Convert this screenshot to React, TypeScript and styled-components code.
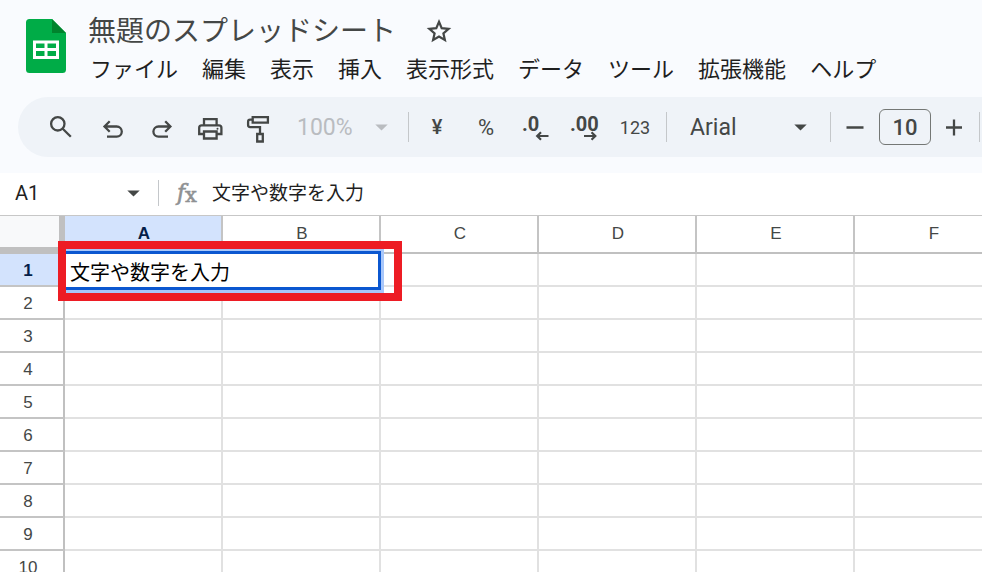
import React from "react";
import styled, { createGlobalStyle } from "styled-components";

const UI = `Roboto, "Noto Sans CJK JP", sans-serif`;
const CELL = `"Liberation Sans", "Noto Sans CJK JP", sans-serif`;
const INK = "#444746";

const GlobalStyle = createGlobalStyle`
  * { box-sizing: border-box; }
  html, body { margin: 0; height: 100%; overflow: hidden; background: #fff; }
  button, input, select { margin: 0; padding: 0; border: 0; background: none; color: inherit; font: inherit; outline: none; }
  button { cursor: pointer; }
`;

const Page = styled.div`
  height: 100vh;
  overflow: hidden;
  display: flex;
  flex-direction: column;
  font-family: ${UI};
  color: #1f1f1f;
`;

const Top = styled.header`
  flex: none;
  background: #f9fbfe;
  padding: 8px 0 16px;
`;

const Brand = styled.div`
  display: flex;
  align-items: flex-start;
  gap: 22px;
  padding: 0 26px 10px;
`;

const LogoLink = styled.a`
  display: block;
  width: 40px;
  height: 54px;
  margin-top: 11px;
  flex: none;
`;

const Titles = styled.div`
  flex: 1;
  min-width: 0;
`;

const TitleRow = styled.div`
  display: flex;
  align-items: center;
  height: 44px;
  gap: 28px;
`;

const TitleInput = styled.input`
  width: 310px;
  height: 44px;
  padding-bottom: 2px;
  font-size: 28px;
  color: ${INK};
`;

const StarButton = styled.button`
  display: flex;
`;

const Menu = styled.nav`
  display: flex;
  gap: 24px;
  height: 35px;
  padding-left: 2px;
`;

const MenuButton = styled.button`
  font-size: 22px;
  line-height: 35px;
  white-space: nowrap;
`;

const Toolbar = styled.div`
  display: flex;
  align-items: center;
  height: 60px;
  margin-left: 18px;
  padding-left: 18px;
  border-radius: 30px 0 0 30px;
  background: #eff3f8;
  color: ${INK};
  overflow: hidden;
`;

const Group = styled.div<{ $gap?: number; $start?: number; $end?: number }>`
  display: flex;
  flex: none;
  align-items: center;
  gap: ${(p) => p.$gap ?? 0}px;
  padding-left: ${(p) => p.$start ?? 0}px;
  padding-right: ${(p) => p.$end ?? 0}px;
`;

const Tool = styled.button<{ $wide?: boolean; $size?: number; $medium?: boolean }>`
  display: flex;
  flex: none;
  align-items: center;
  justify-content: center;
  width: ${(p) => (p.$wide ? 52 : 48)}px;
  height: 48px;
  font-size: ${(p) => p.$size ?? 20}px;
  font-weight: ${(p) => (p.$medium ? 500 : 400)};
`;

const Divider = styled.span<{ $height?: number }>`
  flex: none;
  width: 1px;
  height: ${(p) => p.$height ?? 30}px;
  background: #c4c7ca;
`;

const Picker = styled.label<{ $width: number; $start: number; $end: number; $faded?: boolean }>`
  display: flex;
  flex: none;
  align-items: center;
  width: ${(p) => p.$width}px;
  padding-left: ${(p) => p.$start}px;
  padding-right: ${(p) => p.$end}px;
  color: ${(p) => (p.$faded ? "#b9bcc0" : INK)};
`;

const PickerSelect = styled.select`
  flex: 1;
  min-width: 0;
  height: 36px;
  appearance: none;
  font-size: 23px;
  opacity: 1;
`;

const SizeInput = styled.input`
  flex: none;
  width: 52px;
  height: 36px;
  border: 1px solid #747775;
  border-radius: 6px;
  text-align: center;
  font-size: 22px;
  font-weight: 500;
`;

const FormulaBar = styled.div`
  flex: none;
  display: flex;
  align-items: center;
  height: 43px;
  padding-bottom: 2px;
  border-bottom: 1px solid #c7c7c7;
  background: #fff;
`;

const NameBox = styled.label`
  display: flex;
  align-items: center;
  width: 158px;
  padding: 0 18px 0 15px;
  color: ${INK};
`;

const NameInput = styled.input`
  flex: 1;
  min-width: 0;
  font-size: 20px;
  color: #1f1f1f;
`;

const FormulaIcon = styled.span`
  display: flex;
  width: 53px;
  padding-left: 13px;
`;

const FormulaInput = styled.input`
  flex: 1;
  min-width: 0;
  height: 36px;
  padding-bottom: 4px;
  font-size: 19px;
`;

const SheetArea = styled.main`
  flex: 1;
  min-height: 0;
  overflow: hidden;
`;

const Sheet = styled.table`
  table-layout: fixed;
  width: max-content;
  border-collapse: separate;
  border-spacing: 0;
  font-family: ${CELL};
  font-size: 17px;
`;

const RowCol = styled.col`
  width: 65px;
`;

const DataCol = styled.col`
  width: 158px;
`;

const Corner = styled.td`
  height: 38px;
  padding: 0;
  background: #f8f9fa;
  border-right: 6px solid #c0c0c0;
  border-bottom: 7px solid #c0c0c0;
`;

const ColHead = styled.th<{ $active: boolean }>`
  height: 38px;
  padding: 0 0 0 2px;
  border-right: 2px solid #c4c4c4;
  border-bottom: 2px solid #c0c0c0;
  background: ${(p) => (p.$active ? "#d3e3fd" : "#fff")};
  color: ${(p) => (p.$active ? "#041e49" : INK)};
  font-weight: ${(p) => (p.$active ? 700 : 400)};
`;

const RowHead = styled.th<{ $active: boolean }>`
  height: 33px;
  padding: 2px 7px 0 0;
  border-right: 2px solid #c0c0c0;
  border-bottom: 2px solid #c4c4c4;
  background: ${(p) => (p.$active ? "#d3e3fd" : "#fff")};
  color: ${(p) => (p.$active ? "#041e49" : INK)};
  font-weight: ${(p) => (p.$active ? 700 : 400)};
`;

const Cell = styled.td`
  position: relative;
  height: 33px;
  padding: 0;
  border-right: 2px solid #e1e1e1;
  border-bottom: 2px solid #e1e1e1;
`;

const CellEditor = styled.input`
  && {
    position: absolute;
    z-index: 1;
    top: -3px;
    left: -3px;
    width: 319px;
    height: 39px;
    padding: 2px 4px 0 5px;
    border: 3px solid #0b57d0;
    background: #fff;
    box-shadow: 0 0 0 3px #a8c7fa;
    color: #000;
    font-size: 20px;
  }
`;

const Highlight = styled.div`
  position: absolute;
  z-index: 2;
  top: -13px;
  left: -7px;
  width: 344px;
  height: 60px;
  border: 8px solid #ed1c24;
  pointer-events: none;
`;

const ToolIcon = ({ children }: { children: React.ReactNode }) => (
  <svg width="32" height="32" viewBox="-2 -2 32 32" fill="none" stroke={INK} strokeWidth="2.3" aria-hidden="true">
    {children}
  </svg>
);

const Caret = () => (
  <svg width="13" height="7" viewBox="0 0 13 7" aria-hidden="true">
    <path d="M0.3 0.4h12.4L6.5 6.6z" fill="currentColor" />
  </svg>
);

const Logo = () => (
  <svg width="40" height="54" viewBox="0 0 40 54" aria-hidden="true">
    <path d="M3.5 0H26l14 14v36.500a3.500 3.500 0 0 1-3.500 3.500h-33A3.500 3.500 0 0 1 0 50.500v-47A3.500 3.500 0 0 1 3.500 0z" fill="#00ac47" />
    <path d="M26 0l14 14H26z" fill="#00832d" />
    <path d="M7 21.500h26V40H7zM10 24.500v4.500h8.500v-4.500zM21.500 24.500v4.500H30v-4.500zM10 32v5h8.500v-5zM21.500 32v5H30v-5z" fill="#fff" fillRule="evenodd" />
  </svg>
);

const Star = () => (
  <svg width="26" height="26" viewBox="0 0 26 26" fill="none" stroke={INK} strokeWidth="2.2" aria-hidden="true">
    <path d="M13 4.800l2.700 6.400 6.900.6-5.200 4.500 1.500 6.700-5.900-3.500-5.900 3.500 1.500-6.700-5.200-4.500 6.900-.6z" />
  </svg>
);

const Decimal = ({ digits, add }: { digits: string; add: boolean }) => (
  <svg width="32" height="32" viewBox="0 0 32 32" aria-hidden="true">
    <text x={add ? 2 : 3} y="19.500" fill={INK} fontFamily="Roboto, sans-serif" fontWeight="700" fontSize="20">
      {digits}
    </text>
    <path
      d={add ? "M16 25h11M23.500 21.300l3.800 3.700-3.800 3.700" : "M29.500 25h-11M22 21.300L18.200 25l3.800 3.700"}
      fill="none"
      stroke={INK}
      strokeWidth="2.200"
    />
  </svg>
);

const menus = ["ファイル", "編集", "表示", "挿入", "表示形式", "データ", "ツール", "拡張機能", "ヘルプ"];
const columns = ["A", "B", "C", "D", "E", "F"];
const rows = [1, 2, 3, 4, 5, 6, 7, 8, 9, 10];

export default function App() {
  const [title, setTitle] = React.useState("無題のスプレッドシート");
  const [value, setValue] = React.useState("文字や数字を入力");
  const [size, setSize] = React.useState("10");
  const step = (by: number) => setSize(String(Math.max(1, (Number(size) || 0) + by)));

  return (
    <Page>
      <GlobalStyle />
      <Top>
        <Brand>
          <LogoLink href="#" aria-label="スプレッドシート ホーム">
            <Logo />
          </LogoLink>
          <Titles>
            <TitleRow>
              <TitleInput aria-label="名前を変更" value={title} onChange={(e) => setTitle(e.target.value)} />
              <StarButton aria-label="スターを付ける">
                <Star />
              </StarButton>
            </TitleRow>
            <Menu>
              {menus.map((m) => (
                <MenuButton key={m}>{m}</MenuButton>
              ))}
            </Menu>
          </Titles>
        </Brand>
        <Toolbar role="toolbar">
          <Group $end={5}>
            <Tool aria-label="検索">
              <ToolIcon>
                <circle cx="11.800" cy="10.800" r="6.700" />
                <path d="M16.500 15.500l8.300 8.300" />
              </ToolIcon>
            </Tool>
          </Group>
          <Group>
            <Tool aria-label="元に戻す">
              <ToolIcon>
                <path d="M6 13.500h11.700a5.100 5.100 0 0 1 0 10.200H8M10.700 8.300L5.500 13.500l5.200 5.200" />
              </ToolIcon>
            </Tool>
            <Tool aria-label="やり直し">
              <ToolIcon>
                <path d="M23 13.500H11.500a5.100 5.100 0 0 0 0 10.200H21M18.200 8.300l5.200 5.200-5.200 5.200" />
              </ToolIcon>
            </Tool>
            <Tool aria-label="印刷">
              <ToolIcon>
                <path d="M9 12V6.200h12.600V12M9 21H4.200v-6.200a2.500 2.500 0 0 1 2.500-2.500h17.200a2.500 2.500 0 0 1 2.500 2.500V21h-4.800M9 18.500h12.600v7H9z" />
                <circle cx="22.500" cy="15.700" r="1" fill={INK} stroke="none" />
              </ToolIcon>
            </Tool>
            <Tool aria-label="書式を貼り付け">
              <ToolIcon>
                <path d="M9.700 4.200h15.200v5.500H9.700zM9.700 6.700H7.100a2 2 0 0 0-2 2v3.400a2 2 0 0 0 2 2h9.900v6.200M14.200 21h5.600v7.500h-5.600z" />
              </ToolIcon>
            </Tool>
          </Group>
          <Picker $width={127} $start={16} $end={20} $faded>
            <PickerSelect aria-label="ズーム" defaultValue="100%">
              <option>100%</option>
            </PickerSelect>
            <Caret />
          </Picker>
          <Divider />
          <Group $gap={1} $start={4} $end={5}>
            <Tool aria-label="通貨の表示形式" $medium>¥</Tool>
            <Tool aria-label="パーセント表示形式" $size={22}>%</Tool>
            <Tool aria-label="小数点以下の桁数を減らす">
              <Decimal digits=".0" add={false} />
            </Tool>
            <Tool aria-label="小数点以下の桁数を増やす">
              <Decimal digits=".00" add />
            </Tool>
            <Tool aria-label="表示形式の詳細設定" $wide $size={18}>123</Tool>
          </Group>
          <Divider />
          <Picker $width={163} $start={23} $end={23}>
            <PickerSelect aria-label="フォント" defaultValue="Arial">
              <option>Arial</option>
            </PickerSelect>
            <Caret />
          </Picker>
          <Divider />
          <Tool aria-label="フォントサイズを縮小" onClick={() => step(-1)}>
            <ToolIcon>
              <path d="M5.500 14.500h17" />
            </ToolIcon>
          </Tool>
          <SizeInput aria-label="フォントサイズ" value={size} onChange={(e) => setSize(e.target.value)} />
          <Tool aria-label="フォントサイズを拡大" onClick={() => step(1)}>
            <ToolIcon>
              <path d="M5 14.500h16M13 6.500v16" />
            </ToolIcon>
          </Tool>
          <Divider />
        </Toolbar>
      </Top>
      <FormulaBar>
        <NameBox>
          <NameInput aria-label="名前ボックス" defaultValue="A1" />
          <Caret />
        </NameBox>
        <Divider $height={26} />
        <FormulaIcon>
          <svg width="32" height="34" viewBox="0 0 32 34" aria-hidden="true">
            <g fill="#8f9193" stroke="#8f9193" strokeWidth="0.600">
              <text x="5" y="24" fontFamily="DejaVu Serif, serif" fontStyle="italic" fontSize="22">f</text>
              <text x="13" y="26" fontFamily="DejaVu Serif, serif" fontSize="21">x</text>
            </g>
          </svg>
        </FormulaIcon>
        <FormulaInput aria-label="数式バー" value={value} onChange={(e) => setValue(e.target.value)} />
      </FormulaBar>
      <SheetArea>
        <Sheet>
          <colgroup>
            <RowCol />
            {columns.map((c) => (
              <DataCol key={c} />
            ))}
          </colgroup>
          <thead>
            <tr>
              <Corner />
              {columns.map((c) => (
                <ColHead key={c} scope="col" $active={c === "A"}>{c}</ColHead>
              ))}
            </tr>
          </thead>
          <tbody>
            {rows.map((r) => (
              <tr key={r}>
                <RowHead scope="row" $active={r === 1}>{r}</RowHead>
                {columns.map((c) => (
                  <Cell key={c}>
                    {r === 1 && c === "A" && (
                      <>
                        <CellEditor aria-label="セル A1" value={value} onChange={(e) => setValue(e.target.value)} />
                        <Highlight />
                      </>
                    )}
                  </Cell>
                ))}
              </tr>
            ))}
          </tbody>
        </Sheet>
      </SheetArea>
    </Page>
  );
}
